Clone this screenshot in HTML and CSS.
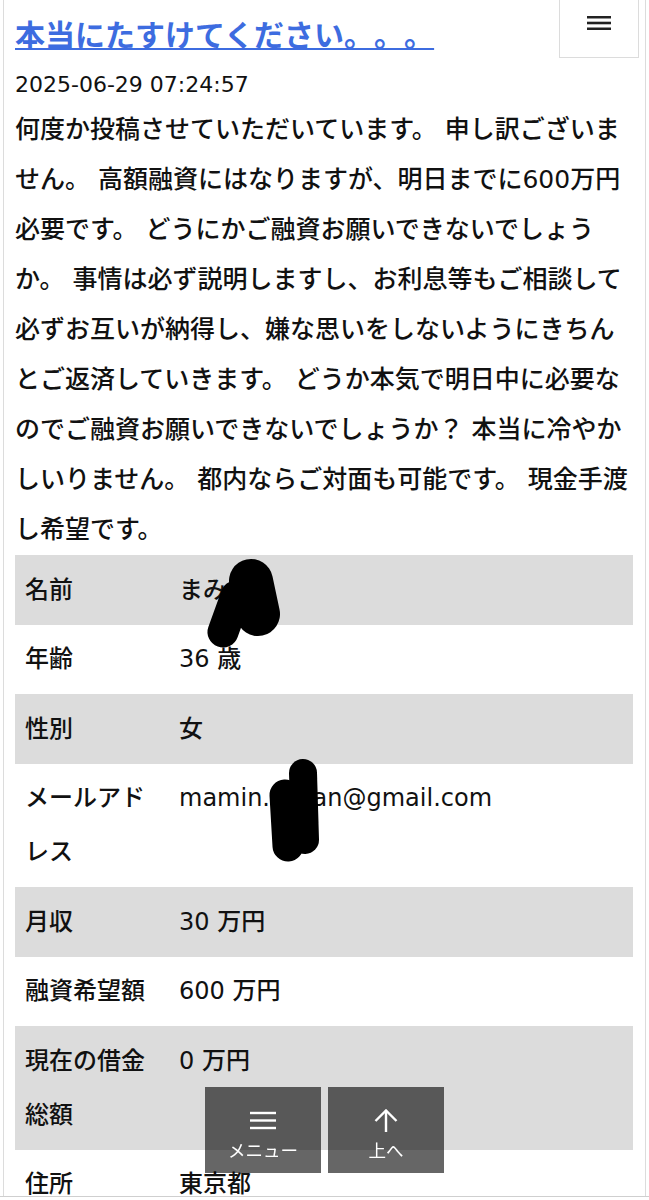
FILE: index.html
```html
<!DOCTYPE html>
<html lang="ja">
<head>
<meta charset="utf-8">
<title>本当にたすけてください。。。</title>
<link rel="stylesheet" href="styles.css">
</head>
<body>
<div class="page">
  <header class="header">
    <h1 class="title"><a href="#">本当にたすけてください。。。</a></h1>
    <div class="menu-btn">
      <svg class="menu-icon" viewBox="0 0 24 14" width="24" height="14">
        <line x1="0" y1="1.2" x2="24" y2="1.2"/>
        <line x1="0" y1="7" x2="24" y2="7"/>
        <line x1="0" y1="12.8" x2="24" y2="12.8"/>
      </svg>
    </div>
  </header>
  <div class="date">2025-06-29 07:24:57</div>
  <p class="body-text">何度か投稿させていただいています。 申し訳ございません。 高額融資にはなりますが、明日までに600万円必要です。 どうにかご融資お願いできないでしょうか。 事情は必ず説明しますし、お利息等もご相談して必ずお互いが納得し、嫌な思いをしないようにきちんとご返済していきます。 どうか本気で明日中に必要なのでご融資お願いできないでしょうか？ 本当に冷やかしいりません。 都内ならご対面も可能です。 現金手渡し希望です。</p>
  <table class="info">
    <tr><td class="label">名前</td><td class="value">まみ</td></tr>
    <tr><td class="label">年齢</td><td class="value">36 歳</td></tr>
    <tr><td class="label">性別</td><td class="value">女</td></tr>
    <tr><td class="label">メールアドレス</td><td class="value">mamin.xxxan@gmail.com</td></tr>
    <tr><td class="label">月収</td><td class="value">30 万円</td></tr>
    <tr><td class="label">融資希望額</td><td class="value">600 万円</td></tr>
    <tr><td class="label">現在の借金総額</td><td class="value">0 万円</td></tr>
    <tr><td class="label">住所</td><td class="value">東京都</td></tr>
  </table>
</div>

<svg class="redactions" viewBox="0 0 649 1200" width="649" height="1200">
  <line x1="251" y1="581" x2="258" y2="614" stroke-width="44"/>
  <line x1="236" y1="596" x2="223" y2="632" stroke-width="31"/>
  <line x1="303" y1="773" x2="305" y2="840" stroke-width="28"/>
  <line x1="285" y1="795" x2="288" y2="846" stroke-width="31"/>
</svg>

<nav class="floating">
  <a class="float-btn" href="#">
    <svg class="float-icon" viewBox="0 0 26 24" width="26" height="24">
      <line x1="0" y1="4" x2="26" y2="4"/>
      <line x1="0" y1="11.5" x2="26" y2="11.5"/>
      <line x1="0" y1="19" x2="26" y2="19"/>
    </svg>
    <span class="float-label">メニュー</span>
  </a>
  <a class="float-btn" href="#">
    <svg class="float-icon" viewBox="0 0 26 24" width="26" height="24">
      <line x1="13" y1="1.5" x2="13" y2="23"/>
      <polyline points="2.5,12 13,1.5 23.5,12" fill="none"/>
    </svg>
    <span class="float-label">上へ</span>
  </a>
</nav>
<div class="bottom-edge"></div>
</body>
</html>
```
FILE: styles.css
```css
html, body {
  margin: 0;
  padding: 0;
  background: #fff;
}

body {
  font-family: "DejaVu Sans", "Noto Sans CJK JP", sans-serif;
  color: #111;
  position: relative;
  text-spacing-trim: space-all;
}

.page {
  margin-left: 3px;
  width: 643px;
  box-sizing: border-box;
  border-left: 1px solid #dcdcdc;
  border-right: 1px solid #dcdcdc;
  padding: 0 12px 40px 11px;
}

.header {
  display: flex;
  justify-content: space-between;
  align-items: flex-start;
}

.title {
  margin: 0;
  padding-top: 14px;
  font-size: 30px;
  line-height: 44px;
  font-weight: 700;
}

.title a {
  color: #3d6ce0;
  text-decoration: underline;
  text-decoration-thickness: 2px;
  text-underline-offset: 2px;
}

.menu-btn {
  width: 80px;
  height: 58px;
  box-sizing: border-box;
  border: 1px solid #dcdcdc;
  border-top: none;
  margin-right: -6px;
  display: flex;
  justify-content: center;
  align-items: flex-start;
  padding-top: 16px;
}

.menu-icon line {
  stroke: #222;
  stroke-width: 2.6;
}

.date {
  margin-top: 7px;
  font-size: 22px;
  line-height: 40px;
}

.body-text {
  margin: 0;
  font-size: 25px;
  line-height: 50px;
  font-weight: 500;
}

.info {
  width: 100%;
  border-collapse: collapse;
  font-size: 24px;
  line-height: 54px;
  font-weight: 500;
}

.info td {
  padding: 7.75px 10px;
  vertical-align: top;
}

.info td.label {
  width: 134px;
}

.info tr:nth-child(odd) {
  background: #dcdcdc;
}

.redactions {
  position: absolute;
  left: 0;
  top: 0;
  pointer-events: none;
}

.redactions line {
  stroke: #000;
  stroke-linecap: round;
}

.floating {
  position: fixed;
  left: 0;
  right: 0;
  bottom: 27px;
  display: flex;
  justify-content: center;
  gap: 7px;
}

.float-btn {
  width: 116px;
  height: 86px;
  box-sizing: border-box;
  background: rgba(0, 0, 0, 0.6);
  color: #fff;
  text-decoration: none;
  display: flex;
  flex-direction: column;
  align-items: center;
  padding-top: 22px;
}

.float-icon line,
.float-icon polyline {
  stroke: #fff;
  stroke-width: 2.4;
}

.float-label {
  margin-top: 3px;
  font-family: "Noto Sans CJK JP", sans-serif;
  font-size: 17.5px;
  line-height: 28px;
}

.bottom-edge {
  position: fixed;
  left: 0;
  right: 0;
  bottom: 0;
  height: 3px;
  background: #fff;
  border-top: 1px solid #cfcfcf;
}
```
